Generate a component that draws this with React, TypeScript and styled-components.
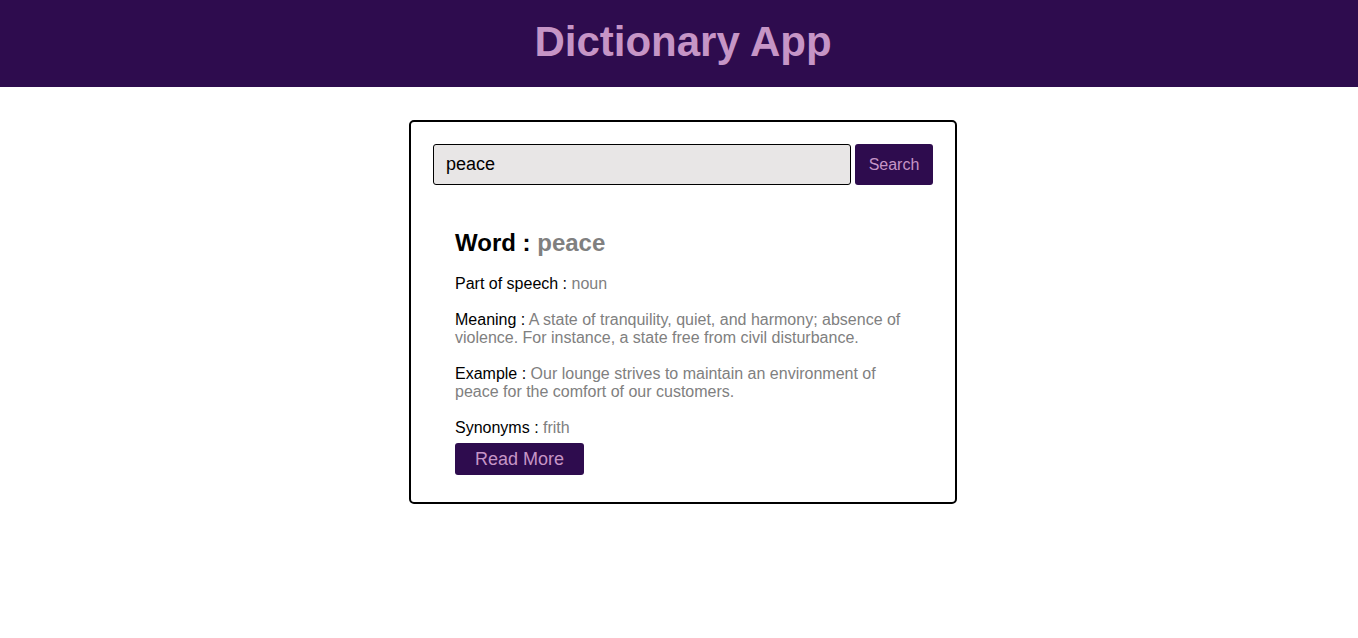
import styled, { createGlobalStyle } from 'styled-components';

const GlobalStyle = createGlobalStyle`
  body {
    margin: 0;
    padding-left: 8px;
    font-family: "Liberation Sans", Arial, sans-serif;
    background: #ffffff;
  }
`;

const Header = styled.header`
  height: 87px;
  margin-left: -8px;
  padding-left: 8px;
  background: #2e0c4e;
  display: flex;
  align-items: center;
  justify-content: center;
`;

const Title = styled.h1`
  margin: 0 0 3px;
  font-size: 42px;
  font-weight: bold;
  color: #c695c6;
`;

const Main = styled.main`
  display: flex;
  justify-content: center;
  padding-top: 33px;
`;

const Card = styled.div`
  width: 500px;
  padding: 22px 22px 27px;
  border: 2px solid #000;
  border-radius: 5px;
`;

const SearchRow = styled.form`
  display: flex;
  gap: 4px;
  height: 41px;
`;

const SearchInput = styled.input`
  flex: 1;
  box-sizing: border-box;
  height: 41px;
  padding: 0 12px;
  font-family: "Liberation Sans", Arial, sans-serif;
  font-size: 18px;
  color: #000;
  background: #e8e6e6;
  border: 1px solid #000;
  border-radius: 3px;
  outline: none;
`;

const Button = styled.button<{ $size?: number }>`
  border: none;
  border-radius: 3px;
  background: #2e0c4e;
  color: #c695c6;
  font-family: "Liberation Sans", Arial, sans-serif;
  font-size: ${({ $size }) => $size ?? 16}px;
  cursor: pointer;
`;

const SearchButton = styled(Button)`
  width: 78px;
  height: 41px;
  padding: 0;
`;

const ReadMore = styled(Button)`
  width: 129px;
  height: 32px;
  padding: 0;
  margin-top: 6px;
`;

const Result = styled.div`
  padding: 44px 22px 0;
  display: flex;
  flex-direction: column;
  align-items: flex-start;
`;

const WordTitle = styled.h2`
  margin: 0 0 18px;
  font-size: 24px;
  line-height: 28px;
  font-weight: bold;
  color: #000;
`;

const Value = styled.span`
  color: #808080;
`;

const Line = styled.p`
  margin: 0 0 18px;
  font-size: 16px;
  line-height: 18px;
  color: #000;

  &:last-of-type {
    margin-bottom: 0;
  }
`;

export default function App() {
  return (
    <>
      <GlobalStyle />
      <Header>
        <Title>Dictionary App</Title>
      </Header>
      <Main>
        <Card>
          <SearchRow onSubmit={(e) => e.preventDefault()}>
            <SearchInput type="text" defaultValue="peace" />
            <SearchButton type="submit">Search</SearchButton>
          </SearchRow>
          <Result>
            <WordTitle>
              Word : <Value>peace</Value>
            </WordTitle>
            <Line>
              Part of speech : <Value>noun</Value>
            </Line>
            <Line>
              Meaning : <Value>A state of tranquility, quiet, and harmony; absence of violence. For instance, a state free from civil disturbance.</Value>
            </Line>
            <Line>
              Example : <Value>Our lounge strives to maintain an environment of peace for the comfort of our customers.</Value>
            </Line>
            <Line>
              Synonyms : <Value>frith</Value>
            </Line>
            <ReadMore $size={18}>Read More</ReadMore>
          </Result>
        </Card>
      </Main>
    </>
  );
}
